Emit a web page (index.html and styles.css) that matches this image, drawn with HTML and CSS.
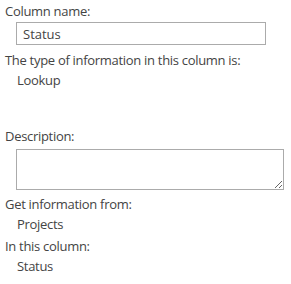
FILE: index.html
```html
<!DOCTYPE html>
<html lang="en">
<head>
  <meta charset="UTF-8">
  <title>Column settings</title>
  <link rel="stylesheet" href="styles.css">
</head>
<body>
  <div class="form">
    <div class="label">Column name:</div>
    <input class="text-input" type="text" value="Status">

    <div class="label after-input">The type of information in this column is:</div>
    <div class="value">Lookup</div>

    <div class="label spaced">Description:</div>
    <textarea class="text-area"></textarea>

    <div class="label after-area">Get information from:</div>
    <div class="value">Projects</div>

    <div class="label after-value">In this column:</div>
    <div class="value">Status</div>
  </div>
</body>
</html>
```

FILE: styles.css
```css
body {
  margin: 0;
  background: #fff;
  font-family: 'Open Sans', 'Noto Sans', sans-serif;
  font-size: 13px;
  letter-spacing: -0.3px;
  color: #444;
}
.form {
  padding: 3px 5px;
}
.label {
  line-height: 17px;
}
.label.after-input {
  margin-top: 7px;
}
.label.spaced {
  margin-top: 39px;
}
.label.after-area {
  margin-top: 6px;
}
.label.after-value {
  margin-top: 5px;
}
.value {
  margin-top: 3px;
  padding-left: 12px;
  line-height: 17px;
}
.text-input {
  display: block;
  box-sizing: border-box;
  width: 250px;
  height: 23px;
  margin: 2px 0 0 11px;
  padding: 0 6px;
  border: 1px solid #ababab;
  font: inherit;
  color: #444;
  outline: none;
}
.text-area {
  display: block;
  box-sizing: border-box;
  width: 268px;
  height: 41px;
  margin: 4px 0 0 11px;
  border: 1px solid #ababab;
  font: inherit;
  resize: both;
}
```
